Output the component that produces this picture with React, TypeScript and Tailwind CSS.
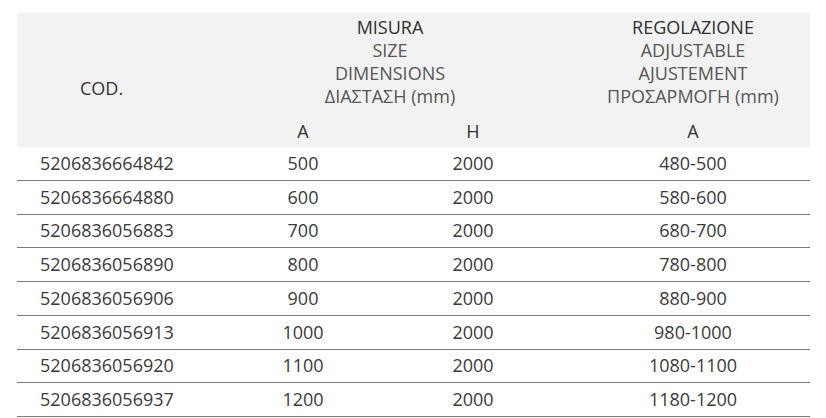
import React from "react";

const rows = [
  ["5206836664842", "500", "2000", "480-500"],
  ["5206836664880", "600", "2000", "580-600"],
  ["5206836056883", "700", "2000", "680-700"],
  ["5206836056890", "800", "2000", "780-800"],
  ["5206836056906", "900", "2000", "880-900"],
  ["5206836056913", "1000", "2000", "980-1000"],
  ["5206836056920", "1100", "2000", "1080-1100"],
  ["5206836056937", "1200", "2000", "1180-1200"],
];

const cols = "grid grid-cols-[219px_134px_206px_234px]";

export default function App() {
  return (
    <div className="w-[826px] h-[418px] bg-white pl-[17px] pt-[13px] text-[18px] text-[#3a3a3a] [font-family:'Open_Sans','Noto_Sans',sans-serif] overflow-hidden">
      <div className="w-[793px]">
        <div className={`${cols} grid-rows-[102px_32px] h-[134px] bg-[#f2f2f2]`}>
          <div className="row-span-2 flex items-center pl-[63px] pt-[16px] text-[#333]">COD.</div>
          <div className="col-span-2 flex flex-col items-center pt-[3px] pr-[32px] leading-[23px]">
            <span className="text-[#2f2f2f]">MISURA</span>
            <span className="text-[#555]">SIZE</span>
            <span className="text-[#555]">DIMENSIONS</span>
            <span className="text-[#555]">ΔΙΑΣΤΑΣΗ (mm)</span>
          </div>
          <div className="flex flex-col items-center pt-[3px] leading-[23px]">
            <span className="text-[#2f2f2f]">REGOLAZIONE</span>
            <span className="text-[#555]">ADJUSTABLE</span>
            <span className="text-[#555]">AJUSTEMENT</span>
            <span className="text-[#555]">ΠΡΟΣΑΡΜΟΓΗ (mm)</span>
          </div>
          <div className="flex items-center justify-center text-[#333]">A</div>
          <div className="flex items-center justify-center text-[#333]">H</div>
          <div className="flex items-center justify-center text-[#333]">A</div>
        </div>
        {rows.map((r) => (
          <div key={r[0]} className={`${cols} h-[33.75px] border-b border-[#7a7a7a] items-center`}>
            <div className="pl-[23px]">{r[0]}</div>
            <div className="text-center">{r[1]}</div>
            <div className="text-center">{r[2]}</div>
            <div className="text-center">{r[3]}</div>
          </div>
        ))}
      </div>
    </div>
  );
}
